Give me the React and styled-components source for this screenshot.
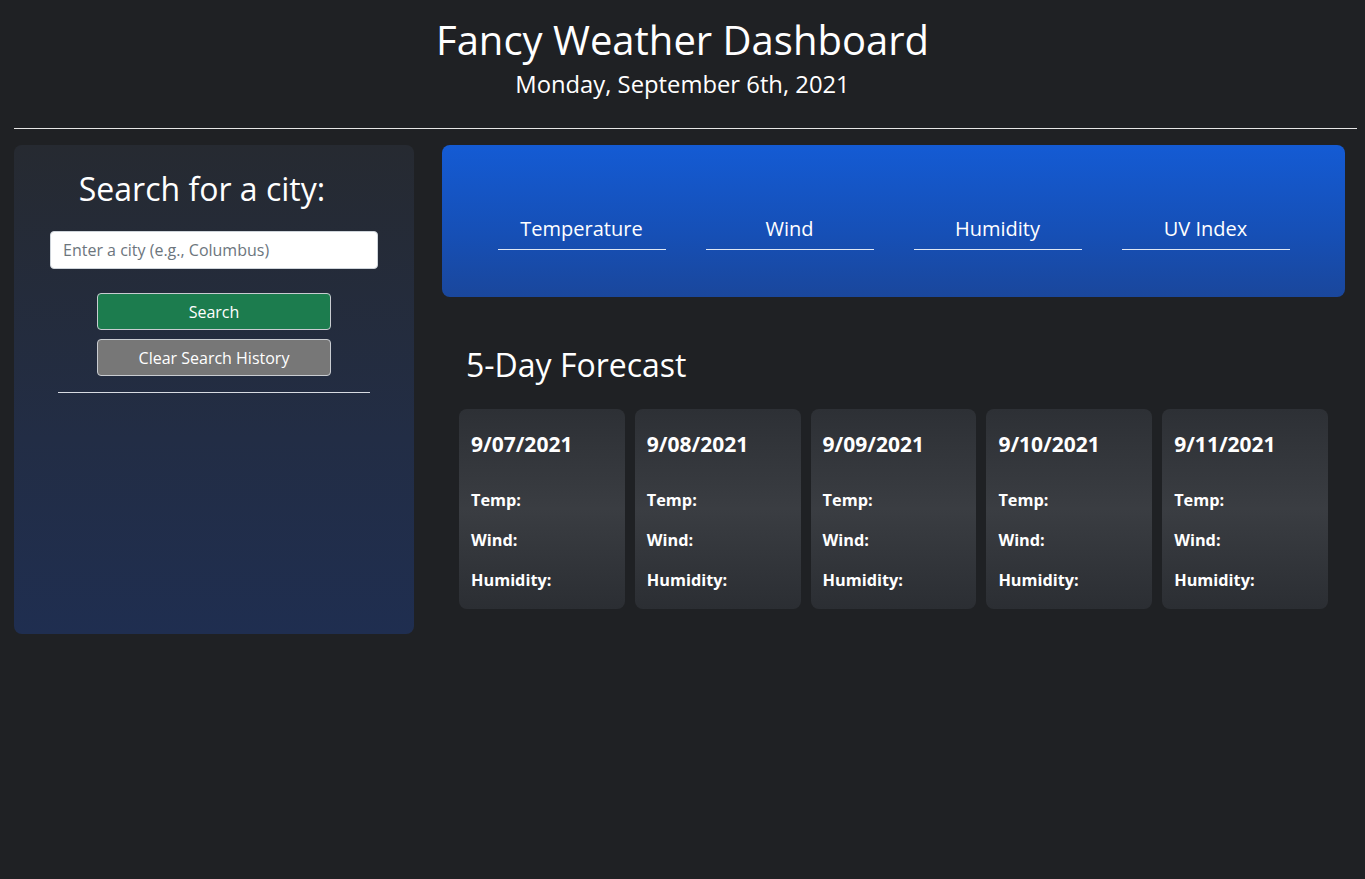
import styled, { createGlobalStyle } from "styled-components";

const GlobalStyle = createGlobalStyle`
    body {
        margin: 0;
        background: #1f2124;
        color: #fff;
        font-family: "Open Sans", "Noto Sans", sans-serif;
    }
    * { box-sizing: border-box; }
`;

const Page = styled.div`
    min-height: 879px;
`;

const Header = styled.header`
    text-align: center;
    padding-top: 14px;
`;

const Title = styled.h1`
    margin: 0;
    font-size: 40px;
    font-weight: 400;
    line-height: 52px;
`;

const DateLine = styled.div`
    font-size: 23.8px;
    line-height: 34px;
    margin-top: 1px;
`;

const Rule = styled.hr`
    border: 0;
    border-top: 1px solid #e6e6e6;
    margin: ${props => props.margin || "0"};
`;

const Main = styled.main`
    display: flex;
    align-items: flex-start;
    gap: 28px;
    padding: 16px 20px 0 14px;
`;

const SearchPanel = styled.aside`
    width: 400px;
    height: 489px;
    flex-shrink: 0;
    border-radius: 8px;
    background: linear-gradient(180deg, #262a31 0%, #222d45 60%, #1f2e50 100%);
    display: flex;
    flex-direction: column;
    align-items: center;
    padding-top: 24px;
`;

const SearchTitle = styled.h2`
    margin: 0 24px 0 0;
    font-size: 32px;
    font-weight: 400;
    line-height: 40px;
`;

const CityInput = styled.input`
    margin-top: 22px;
    width: 328px;
    height: 38px;
    border: 1px solid #ced4da;
    border-radius: 4px;
    background: #fff;
    padding: 0 12px;
    font-family: inherit;
    font-size: 16px;
    color: #212529;
    &::placeholder { color: #6c757d; }
`;

const ActionButton = styled.button`
    width: 234px;
    height: 37px;
    margin-top: ${props => props.gap}px;
    border: 1px solid #c9ccd1;
    border-radius: 4px;
    background: ${props => props.tone};
    color: #fff;
    font-family: inherit;
    font-size: 16px;
    cursor: pointer;
`;

const PanelRule = styled.hr`
    width: 312px;
    border: 0;
    border-top: 1px solid #d7dbe2;
    margin: 16px 0 0;
`;

const RightColumn = styled.section`
    flex: 1;
`;

const NowCard = styled.div`
    height: 152px;
    border-radius: 8px;
    background: linear-gradient(180deg, #145bd4 0%, #164fb5 60%, #1a479c 100%);
    display: flex;
    justify-content: center;
    align-items: center;
    gap: 40px;
    padding-top: 22px;
`;

const Stat = styled.div`
    width: 168px;
    text-align: center;
    font-size: 20px;
    line-height: 28px;
    padding-bottom: 6px;
    border-bottom: 1px solid #dfe7f5;
`;

const Forecast = styled.div`
    padding: 46px 17px 0;
`;

const ForecastTitle = styled.h3`
    margin: 0 0 22px 7px;
    font-size: 32px;
    font-weight: 400;
    line-height: 44px;
`;

const CardRow = styled.div`
    display: grid;
    grid-template-columns: repeat(5, 1fr);
    gap: 10px;
`;

const DayCard = styled.div`
    height: 200px;
    border-radius: 8px;
    background: linear-gradient(180deg, #2d3035 0%, #3a3d42 50%, #2b2e33 100%);
    padding: 20px 12px 0;
`;

const DayDate = styled.div`
    font-size: 21px;
    font-weight: 700;
    line-height: 30px;
    margin-bottom: 30px;
`;

const DayLine = styled.div`
    font-size: 16.3px;
    font-weight: 700;
    line-height: 22px;
    margin-bottom: 18px;
`;

const days = ["9/07/2021", "9/08/2021", "9/09/2021", "9/10/2021", "9/11/2021"];
const stats = ["Temperature", "Wind", "Humidity", "UV Index"];

export default function App() {
    return (
        <Page>
            <GlobalStyle />
            <Header>
                <Title>Fancy Weather Dashboard</Title>
                <DateLine>Monday, September 6th, 2021</DateLine>
                <Rule margin="27px 8px 0 14px" />
            </Header>
            <Main>
                <SearchPanel>
                    <SearchTitle>Search for a city:</SearchTitle>
                    <CityInput placeholder="Enter a city (e.g., Columbus)" />
                    <ActionButton gap={24} tone="#1c7c4e">Search</ActionButton>
                    <ActionButton gap={9} tone="#777777">Clear Search History</ActionButton>
                    <PanelRule />
                </SearchPanel>
                <RightColumn>
                    <NowCard>
                        {stats.map(s => <Stat key={s}>{s}</Stat>)}
                    </NowCard>
                    <Forecast>
                        <ForecastTitle>5-Day Forecast</ForecastTitle>
                        <CardRow>
                            {days.map(d => (
                                <DayCard key={d}>
                                    <DayDate>{d}</DayDate>
                                    <DayLine>Temp:</DayLine>
                                    <DayLine>Wind:</DayLine>
                                    <DayLine>Humidity:</DayLine>
                                </DayCard>
                            ))}
                        </CardRow>
                    </Forecast>
                </RightColumn>
            </Main>
        </Page>
    );
}
